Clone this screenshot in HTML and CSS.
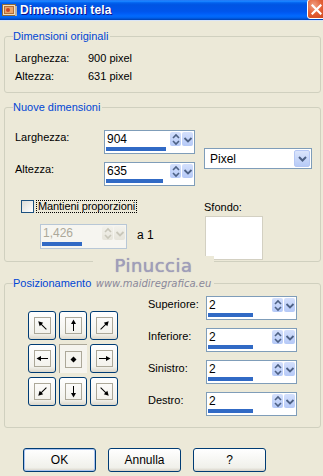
FILE: index.html
```html
<!DOCTYPE html>
<html lang="it">
<head>
  <meta charset="UTF-8">
  <title>Dimensioni tela</title>
  <link rel="stylesheet" href="styles.css">
</head>
<body>
  <!-- Title bar -->
  <div class="titlebar">
    <svg class="app-icon" width="15" height="14" viewBox="0 0 15 14">
      <rect x="0.5" y="1.5" width="13" height="11" fill="#f3dfc0" stroke="#8a6a3c"/>
      <rect x="2.5" y="3.5" width="9" height="7" fill="#e9a56a" stroke="#b0703a"/>
      <circle cx="6" cy="7" r="2" fill="#c9462a"/>
      <rect x="13" y="3" width="2" height="10" fill="#b9b2a6"/>
    </svg>
    <span class="title">Dimensioni tela</span>
    <div class="close">
      <svg width="11" height="11" viewBox="0 0 11 11">
        <path d="M1.5 1.5 L9.5 9.5 M9.5 1.5 L1.5 9.5" stroke="#fff" stroke-width="2.2" stroke-linecap="square"/>
      </svg>
    </div>
  </div>

  <div class="dialog">
    <!-- Dimensioni originali -->
    <div class="group g-orig">
      <div class="group-title">Dimensioni originali</div>
      <div class="info-row"><span class="info-label">Larghezza:</span><span>900 pixel</span></div>
      <div class="info-row"><span class="info-label">Altezza:</span><span>631 pixel</span></div>
    </div>

    <!-- Nuove dimensioni -->
    <div class="group g-new">
      <div class="group-title">Nuove dimensioni</div>
      <div class="nd-top">
        <div class="nd-fields">
          <div class="field-row">
            <span class="field-label">Larghezza:</span>
            <div class="spin">
              <div class="spin-top">
                <span class="spin-val">904</span>
                <span class="spin-btn"><svg width="10" height="13" viewBox="0 0 10 13"><path d="M2 5 L5 2 L8 5 M2 8 L5 11 L8 8" fill="none" stroke="#4d6185" stroke-width="1.6"/></svg></span>
                <span class="spin-btn"><svg width="10" height="13" viewBox="0 0 10 13"><path d="M1.5 5 L5 8.5 L8.5 5" fill="none" stroke="#4d6185" stroke-width="1.8"/></svg></span>
              </div>
              <div class="spin-bar" style="width: 60px"></div>
            </div>
          </div>
          <div class="field-row">
            <span class="field-label">Altezza:</span>
            <div class="spin">
              <div class="spin-top">
                <span class="spin-val">635</span>
                <span class="spin-btn"><svg width="10" height="13" viewBox="0 0 10 13"><path d="M2 5 L5 2 L8 5 M2 8 L5 11 L8 8" fill="none" stroke="#4d6185" stroke-width="1.6"/></svg></span>
                <span class="spin-btn"><svg width="10" height="13" viewBox="0 0 10 13"><path d="M1.5 5 L5 8.5 L8.5 5" fill="none" stroke="#4d6185" stroke-width="1.8"/></svg></span>
              </div>
              <div class="spin-bar" style="width: 57px"></div>
            </div>
          </div>
        </div>
        <div class="select">
          <span class="select-val">Pixel</span>
          <span class="select-btn"><svg width="11" height="11" viewBox="0 0 11 11"><path d="M2 4 L5.5 7.5 L9 4" fill="none" stroke="#4d6185" stroke-width="2"/></svg></span>
        </div>
      </div>
      <div class="nd-bottom">
        <div class="nd-left">
          <div class="check-row">
            <span class="checkbox"></span>
            <span class="check-label">Mantieni proporzioni</span>
          </div>
          <div class="ratio-row">
            <div class="spin spin-ratio disabled">
              <div class="spin-top">
                <span class="spin-val">1,426</span>
                <span class="spin-btn"><svg width="10" height="13" viewBox="0 0 10 13"><path d="M2 5 L5 2 L8 5 M2 8 L5 11 L8 8" fill="none" stroke="#c9c7ba" stroke-width="1.6"/></svg></span>
                <span class="spin-btn"><svg width="10" height="13" viewBox="0 0 10 13"><path d="M1.5 5 L5 8.5 L8.5 5" fill="none" stroke="#c9c7ba" stroke-width="1.8"/></svg></span>
              </div>
              <div class="spin-bar" style="width: 40px"></div>
            </div>
            <span class="ratio-text">a 1</span>
          </div>
        </div>
        <div class="nd-right">
          <div class="swatch-label">Sfondo:</div>
          <div class="swatch"></div>
        </div>
      </div>
    </div>

    <!-- Posizionamento -->
    <div class="group g-pos">
      <div class="group-title">Posizionamento</div>
      <div class="pos-body">
        <div class="anchor-grid">
          <div class="anchor"><span class="anchor-box"><svg width="15" height="15" viewBox="0 0 15 15"><g transform="rotate(-45 7.5 7.5)"><path d="M7.5 13 V4" stroke="#000"/><path d="M7.5 1.5 L5 6 H10 Z"/></g></svg></span></div>
          <div class="anchor"><span class="anchor-box"><svg width="15" height="15" viewBox="0 0 15 15"><g><path d="M7.5 13 V4" stroke="#000"/><path d="M7.5 1.5 L5 6 H10 Z"/></g></svg></span></div>
          <div class="anchor"><span class="anchor-box"><svg width="15" height="15" viewBox="0 0 15 15"><g transform="rotate(45 7.5 7.5)"><path d="M7.5 13 V4" stroke="#000"/><path d="M7.5 1.5 L5 6 H10 Z"/></g></svg></span></div>
          <div class="anchor"><span class="anchor-box"><svg width="15" height="15" viewBox="0 0 15 15"><g transform="rotate(-90 7.5 7.5)"><path d="M7.5 13 V4" stroke="#000"/><path d="M7.5 1.5 L5 6 H10 Z"/></g></svg></span></div>
          <div class="anchor pressed"><span class="anchor-box"><svg width="15" height="15" viewBox="0 0 15 15"><path d="M7.5 4.5 L10.5 7.5 L7.5 10.5 L4.5 7.5 Z"/></svg></span></div>
          <div class="anchor"><span class="anchor-box"><svg width="15" height="15" viewBox="0 0 15 15"><g transform="rotate(90 7.5 7.5)"><path d="M7.5 13 V4" stroke="#000"/><path d="M7.5 1.5 L5 6 H10 Z"/></g></svg></span></div>
          <div class="anchor"><span class="anchor-box"><svg width="15" height="15" viewBox="0 0 15 15"><g transform="rotate(-135 7.5 7.5)"><path d="M7.5 13 V4" stroke="#000"/><path d="M7.5 1.5 L5 6 H10 Z"/></g></svg></span></div>
          <div class="anchor"><span class="anchor-box"><svg width="15" height="15" viewBox="0 0 15 15"><g transform="rotate(180 7.5 7.5)"><path d="M7.5 13 V4" stroke="#000"/><path d="M7.5 1.5 L5 6 H10 Z"/></g></svg></span></div>
          <div class="anchor"><span class="anchor-box"><svg width="15" height="15" viewBox="0 0 15 15"><g transform="rotate(135 7.5 7.5)"><path d="M7.5 13 V4" stroke="#000"/><path d="M7.5 1.5 L5 6 H10 Z"/></g></svg></span></div>
        </div>
        <div class="margins">
          <div class="field-row">
            <span class="margin-label">Superiore:</span>
            <div class="spin">
              <div class="spin-top">
                <span class="spin-val">2</span>
                <span class="spin-btn"><svg width="10" height="13" viewBox="0 0 10 13"><path d="M2 5 L5 2 L8 5 M2 8 L5 11 L8 8" fill="none" stroke="#4d6185" stroke-width="1.6"/></svg></span>
                <span class="spin-btn"><svg width="10" height="13" viewBox="0 0 10 13"><path d="M1.5 5 L5 8.5 L8.5 5" fill="none" stroke="#4d6185" stroke-width="1.8"/></svg></span>
              </div>
              <div class="spin-bar" style="width: 45px"></div>
            </div>
          </div>
          <div class="field-row">
            <span class="margin-label">Inferiore:</span>
            <div class="spin">
              <div class="spin-top">
                <span class="spin-val">2</span>
                <span class="spin-btn"><svg width="10" height="13" viewBox="0 0 10 13"><path d="M2 5 L5 2 L8 5 M2 8 L5 11 L8 8" fill="none" stroke="#4d6185" stroke-width="1.6"/></svg></span>
                <span class="spin-btn"><svg width="10" height="13" viewBox="0 0 10 13"><path d="M1.5 5 L5 8.5 L8.5 5" fill="none" stroke="#4d6185" stroke-width="1.8"/></svg></span>
              </div>
              <div class="spin-bar" style="width: 45px"></div>
            </div>
          </div>
          <div class="field-row">
            <span class="margin-label">Sinistro:</span>
            <div class="spin">
              <div class="spin-top">
                <span class="spin-val">2</span>
                <span class="spin-btn"><svg width="10" height="13" viewBox="0 0 10 13"><path d="M2 5 L5 2 L8 5 M2 8 L5 11 L8 8" fill="none" stroke="#4d6185" stroke-width="1.6"/></svg></span>
                <span class="spin-btn"><svg width="10" height="13" viewBox="0 0 10 13"><path d="M1.5 5 L5 8.5 L8.5 5" fill="none" stroke="#4d6185" stroke-width="1.8"/></svg></span>
              </div>
              <div class="spin-bar" style="width: 45px"></div>
            </div>
          </div>
          <div class="field-row">
            <span class="margin-label">Destro:</span>
            <div class="spin">
              <div class="spin-top">
                <span class="spin-val">2</span>
                <span class="spin-btn"><svg width="10" height="13" viewBox="0 0 10 13"><path d="M2 5 L5 2 L8 5 M2 8 L5 11 L8 8" fill="none" stroke="#4d6185" stroke-width="1.6"/></svg></span>
                <span class="spin-btn"><svg width="10" height="13" viewBox="0 0 10 13"><path d="M1.5 5 L5 8.5 L8.5 5" fill="none" stroke="#4d6185" stroke-width="1.8"/></svg></span>
              </div>
              <div class="spin-bar" style="width: 45px"></div>
            </div>
          </div>
        </div>
      </div>
    </div>

    <!-- Buttons -->
    <div class="buttons">
      <button class="btn default">OK</button>
      <button class="btn">Annulla</button>
      <button class="btn">?</button>
    </div>
  </div>

  <!-- Watermark -->
  <div class="watermark">
    <div class="wm-name">Pinuccia</div>
    <div class="wm-site">www.maidiregrafica.eu</div>
  </div>
</body>
</html>
```

FILE: styles.css
```css
body {
  margin: 0;
  width: 323px;
  height: 476px;
  overflow: hidden;
  position: relative;
  background: #ece9d8;
  font-family: "Liberation Sans", Arial, sans-serif;
  font-size: 11px;
  color: #000;
}

/* Title bar */
.titlebar {
  height: 20px;
  display: flex;
  align-items: center;
  padding-left: 2px;
  overflow: hidden;
  border-bottom: 1px solid #d8e4f8;
  background: linear-gradient(to bottom, #0058ee 0%, #3593ff 4%, #127dff 8%, #0262ee 14%, #0054e3 24%, #0055eb 56%, #005bf5 66%, #026afe 80%, #0062ef 88%, #0052d6 94%, #0040ab 100%);
}
.app-icon {
  flex: none;
}
.title {
  margin-left: 3px;
  color: #fff;
  font-weight: bold;
  font-size: 12px;
  letter-spacing: 0.2px;
  text-shadow: 1px 1px #0f1089;
}
.close {
  flex: none;
  margin-left: auto;
  margin-right: -5px;
  margin-top: -3px;
  width: 21px;
  height: 20px;
  box-sizing: border-box;
  border: 1px solid #fff;
  border-radius: 3px;
  background: radial-gradient(circle at 30% 30%, #f0a184 0%, #e35f35 45%, #c93f16 100%);
  display: flex;
  align-items: center;
  padding-left: 3px;
  padding-top: 2px;
}

/* Dialog */
.dialog {
  padding: 0 2px 0 4px;
}
.group {
  border: 1px solid #d0d0bf;
  border-radius: 3px;
  padding: 0 0 0 10px;
}
.group-title {
  display: table;
  margin: -7px 0 0 -2px;
  padding: 0 2px 0 0;
  line-height: 13px;
  background: #ece9d8;
  color: #0046d5;
}

.g-orig {
  margin-top: 15px;
  padding-bottom: 7px;
}
.info-row {
  display: flex;
  line-height: 18px;
}
.group-title + .info-row {
  margin-top: 6px;
}
.info-label {
  width: 73px;
}

/* Nuove dimensioni */
.g-new {
  margin-top: 14px;
  padding-bottom: 1px;
}
.nd-top {
  display: flex;
  align-items: center;
  margin-top: 16px;
}
.nd-fields {
  display: flex;
  flex-direction: column;
  gap: 8px;
}
.field-row {
  display: flex;
  align-items: flex-start;
}
.field-label {
  width: 89px;
  line-height: 13px;
  padding-top: 1px;
}
.select {
  margin-left: 9px;
  width: 108px;
  height: 21px;
  box-sizing: border-box;
  border: 1px solid #7f9db9;
  background: #fff;
  display: flex;
  align-items: center;
  padding: 1px;
  margin-top: 1px;
}
.select-val {
  flex: 1;
  padding-left: 4px;
  font-size: 12px;
}
.select-btn {
  width: 16px;
  height: 17px;
  box-sizing: border-box;
  border: 1px solid #b6c8f5;
  border-radius: 2px;
  background: linear-gradient(to bottom, #dbe5fc, #b7cbf7);
  display: flex;
  align-items: center;
  justify-content: center;
}

/* Spin control */
.spin {
  width: 91px;
  height: 24px;
  box-sizing: border-box;
  border: 1px solid #7f9db9;
  background: #fff;
  display: flex;
  flex-direction: column;
}
.spin-top {
  display: flex;
  height: 15px;
}
.spin-val {
  flex: 1;
  padding-left: 2px;
  line-height: 16px;
  font-size: 12px;
}
.spin-btn {
  width: 11px;
  height: 14px;
  margin-top: 1px;
  box-sizing: border-box;
  border-radius: 2px;
  background: linear-gradient(to bottom, #d4e0fc, #b5c9f7);
  display: flex;
  align-items: center;
  justify-content: center;
}
.spin-btn + .spin-btn {
  margin-left: 1px;
  margin-right: 1px;
}
.spin-bar {
  height: 4px;
  margin: auto 0 2px 1px;
  background: #316ac5;
}

.spin-ratio {
  width: 87px;
  height: 25px;
}
.spin.disabled {
  border-color: #b8c7d6;
  background: #f6f5f0;
  color: #aca899;
}
.spin.disabled .spin-btn {
  background: linear-gradient(to bottom, #f3f2ec, #e6e4da);
}

.nd-bottom {
  display: flex;
  align-items: flex-start;
  margin-top: 14px;
}
.nd-left {
  width: 189px;
}
.check-row {
  display: flex;
  align-items: center;
  margin-left: 6px;
}
.checkbox {
  width: 13px;
  height: 13px;
  box-sizing: border-box;
  border: 1px solid #1c5180;
  background: linear-gradient(135deg, #dcdcd7, #fff);
}
.check-label {
  margin-left: 2px;
  padding: 0 1px;
  line-height: 11px;
  border: 1px dotted #000;
  letter-spacing: -0.1px;
}
.ratio-row {
  display: flex;
  align-items: center;
  margin: 11px 0 0 25px;
}
.ratio-text {
  margin-left: 10px;
  margin-top: -3px;
  font-size: 12px;
}
.nd-right {
  padding-top: 1px;
}
.swatch-label {
  line-height: 13px;
}
.swatch {
  margin: 2px 0 0 1px;
  width: 58px;
  height: 44px;
  box-sizing: border-box;
  border: 1px solid #d3d0c2;
  background: #fff;
}

/* Posizionamento */
.g-pos {
  margin-top: 21px;
  padding-bottom: 11px;
}
.pos-body {
  display: flex;
  align-items: flex-start;
  margin-top: 6px;
}
.anchor-grid {
  display: grid;
  grid-template-columns: repeat(3, 28px);
  grid-auto-rows: 29px;
  column-gap: 3px;
  row-gap: 4px;
  margin: 15px 0 0 13px;
}
.anchor {
  box-sizing: border-box;
  border: 1px solid #003c74;
  border-radius: 3px;
  background: linear-gradient(to bottom, #fff, #f3f2ec 80%, #dcd8cc);
  display: flex;
  align-items: center;
  justify-content: center;
}
.anchor.pressed {
  border: none;
  border-radius: 0;
  border-top: 1px solid #aca899;
  border-left: 1px solid #aca899;
  background: #f5f4ee;
}
.anchor-box {
  width: 17px;
  height: 17px;
  box-sizing: border-box;
  border: 1px solid #aca899;
  display: flex;
  align-items: center;
  justify-content: center;
}
.margins {
  margin-left: 30px;
  display: flex;
  flex-direction: column;
  gap: 8px;
}
.margin-label {
  width: 58px;
  line-height: 13px;
  padding-top: 2px;
}

/* Buttons */
.buttons {
  display: flex;
  gap: 12px;
  margin: 20px 0 0 19px;
}
.btn {
  width: 73px;
  height: 24px;
  box-sizing: border-box;
  border: 1px solid #003c74;
  border-radius: 3px;
  background: linear-gradient(to bottom, #fff, #f0f0ea 85%, #d6d0c5);
  font-family: "Liberation Sans", Arial, sans-serif;
  font-size: 12px;
  color: #000;
  padding: 0;
}
.btn.default {
  box-shadow: inset 0 0 0 1px #a9c3f0;
}

/* Watermark drawn over the dialog */
.watermark {
  position: absolute;
  left: 93px;
  top: 256px;
  width: 121px;
  text-align: center;
  background: #ece9d8;
}
.wm-name {
  font-family: "DejaVu Sans", sans-serif;
  font-size: 18px;
  line-height: 20px;
  letter-spacing: 0.5px;
  color: #a09eba;
  text-shadow: 0 0 1px #8f8daa;
}
.wm-site {
  font-family: "DejaVu Sans", sans-serif;
  font-style: italic;
  font-size: 10px;
  line-height: 12px;
  color: #8a889a;
  margin-top: 2px;
}
```
